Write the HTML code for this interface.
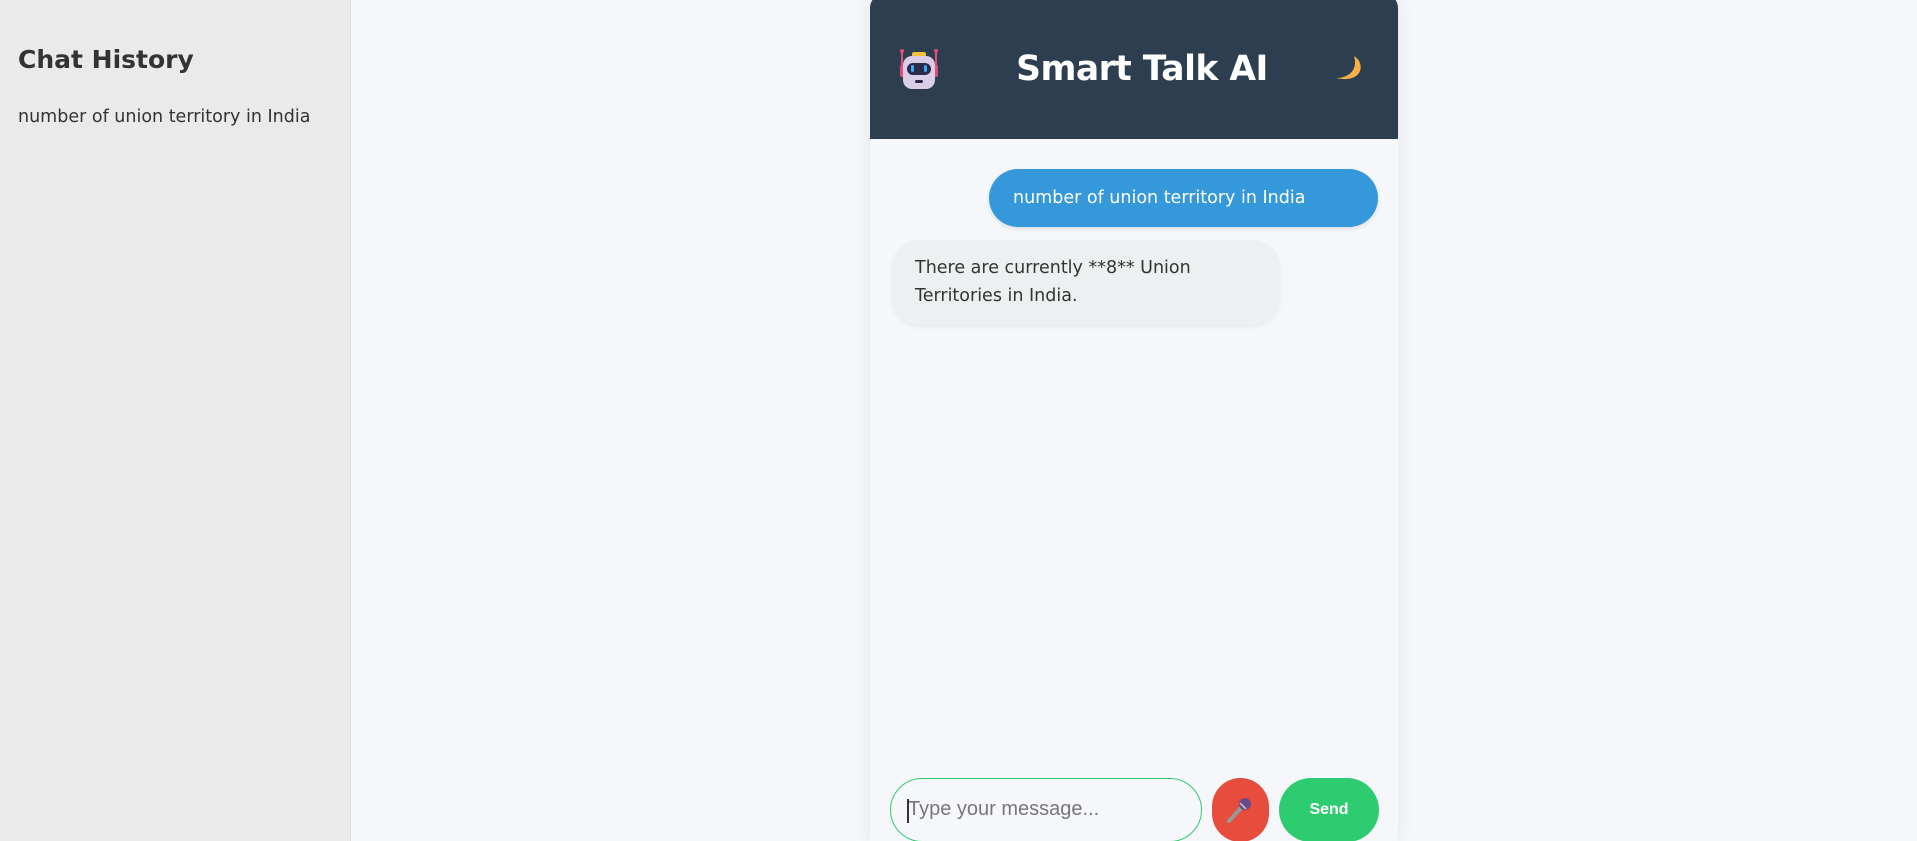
<!DOCTYPE html>
<html><head><meta charset="utf-8"><style>
*{box-sizing:border-box;margin:0;padding:0}
html,body{width:1917px;height:841px;overflow:hidden;background:#f5f7fa;font-family:"DejaVu Sans","Liberation Sans",sans-serif}
body{position:relative}
.side{position:absolute;left:0;top:0;width:351px;height:841px;background:#eaeaea;border-right:1px solid #dcdcdc}
.side h2{position:absolute;left:18px;top:45px;font-size:25px;font-weight:bold;color:#333}
.side p{position:absolute;left:18px;top:107px;font-size:17.5px;color:#333}
.chat{position:absolute;left:870px;top:-6px;width:528px;height:847px;background:#f5f7fa;border-radius:14px 14px 0 0;box-shadow:0 0 18px rgba(0,0,0,.08);overflow:hidden}
.hdr{position:absolute;left:0;top:0;width:528px;height:145px;background:#2c3e50}
.title{position:absolute;left:0;width:528px;text-align:center;top:55px;font-size:34.5px;font-weight:bold;color:#fff;letter-spacing:-0.5px;padding-left:16px}
.u{position:absolute;left:119px;top:175px;width:389px;height:58px;background:#3498db;border-radius:29px;color:#fff;font-size:17.5px;line-height:58px;padding-left:24px;box-shadow:0 2px 5px rgba(0,0,0,.1)}
.b{position:absolute;left:22px;top:246px;width:388px;height:85px;background:#ecf0f1;border-radius:28px;color:#333;font-size:17.5px;line-height:28px;padding:14px 0 0 23px;box-shadow:0 2px 5px rgba(0,0,0,.06)}
.in{position:absolute;left:20px;top:784px;width:312px;height:64px;border:1.5px solid #2ecc71;border-radius:32px;font-family:"Liberation Sans",sans-serif;font-size:20px;color:#777;padding:19px 0 0 17px}
.in:before{content:"";position:absolute;left:16px;top:20px;width:1.5px;height:24px;background:#333}
.mic{position:absolute;left:342px;top:784px;width:57px;height:64px;background:#e74c3c;border-radius:30px}
.send{position:absolute;left:409px;top:784px;width:100px;height:64px;background:#2ecc71;border-radius:32px;color:#fff;font-family:"Liberation Sans",sans-serif;font-weight:bold;font-size:16px;text-align:center;line-height:64px}
</style></head><body>
<div class="side"><h2>Chat History</h2><p>number of union territory in India</p></div>
<div class="chat">
<div class="hdr">
<svg style="position:absolute;left:29px;top:54px" width="40" height="42" viewBox="0 0 40 42">
<rect x="2" y="3" width="2" height="14" fill="#e84a7a"/><circle cx="3" cy="3" r="2" fill="#e84a7a"/>
<rect x="36" y="3" width="2" height="14" fill="#e84a7a"/><circle cx="37" cy="3" r="2" fill="#e84a7a"/>
<rect x="1" y="17" width="5" height="12" rx="2" fill="#e84a7a"/><rect x="34" y="17" width="5" height="12" rx="2" fill="#e84a7a"/>
<rect x="13" y="4" width="14" height="5" rx="2" fill="#f5c03a"/>
<rect x="4" y="8" width="32" height="33" rx="9" fill="#d9cde8"/>
<rect x="8" y="15" width="24" height="12" rx="6" fill="#2b2a4a"/>
<rect x="12" y="17" width="3" height="7" rx="1.5" fill="#3fa9f5"/><rect x="25" y="17" width="3" height="7" rx="1.5" fill="#3fa9f5"/>
<rect x="16" y="32" width="8" height="3" rx="1.5" fill="#2b2a4a"/>
</svg>
<div class="title">Smart Talk AI</div>
<svg style="position:absolute;left:463px;top:60px" width="32" height="32" viewBox="0 0 32 32">
<path d="M21 2 C33 9 30 30 3 24 C17 24 25 15 21 2Z" fill="#f5b048"/>
</svg>
</div>
<div class="u">number of union territory in India</div>
<div class="b">There are currently **8** Union<br>Territories in India.</div>
<div class="in">Type your message...</div>
<div class="mic"><svg style="position:absolute;left:14px;top:19px" width="28" height="26" viewBox="0 0 28 26"><path d="M3 24 L15 11" stroke="#999" stroke-width="4" stroke-linecap="round"/><circle cx="19" cy="7" r="6" fill="#6b4a8a"/><path d="M14 6 L20 12" stroke="#ccc" stroke-width="1.5"/></svg></div>
<div class="send">Send</div>
</div>
</body></html>
